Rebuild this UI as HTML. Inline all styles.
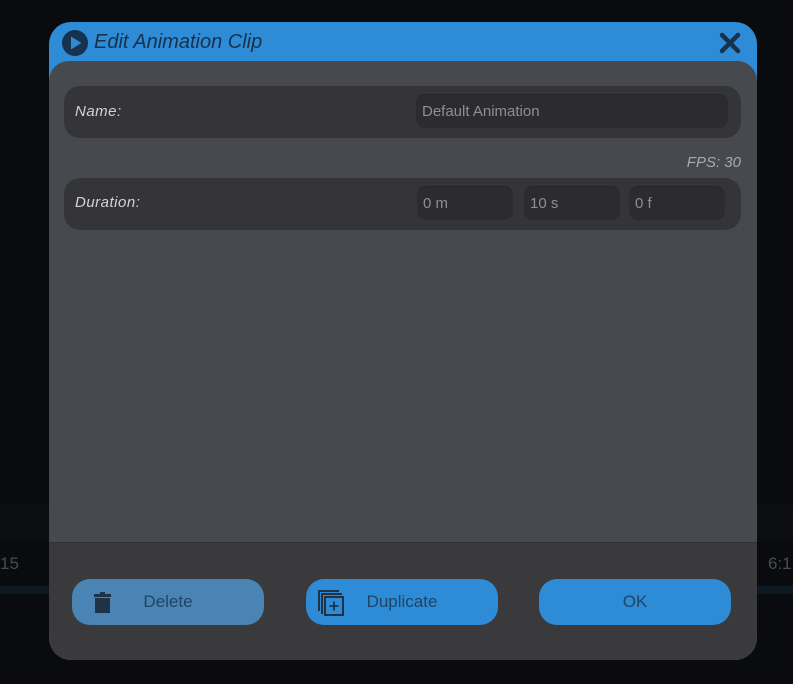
<!DOCTYPE html>
<html><head><style>
*{margin:0;padding:0;box-sizing:border-box}
body{width:793px;height:684px;background:#0a0b0e;position:relative;overflow:hidden;font-family:"Liberation Sans",sans-serif}
.a{position:absolute}
.dlg{left:49px;top:22px;width:708px;height:638px;border-radius:22px;background:#2e8bd6;overflow:hidden}
.body{left:0;top:39px;width:708px;height:599px;background:#46494e;border-radius:20px 20px 22px 22px;overflow:hidden}
.foot{left:0;top:481px;width:708px;height:118px;background:#3a3a3c;border-top:1px solid #333}
.row{background:#353539;border-radius:16px}
.lbl{color:#d4d4d6;font-style:italic;font-size:15px;letter-spacing:.5px}
.inp{background:#2c2c2f;border-radius:9px;color:#8e8f92;font-size:15px;padding-left:6px;line-height:34px;border-top:1px solid #252527}
.btn{border-radius:18px;height:46px;color:#1f4467;font-size:17px;line-height:46px;text-align:center}
</style></head><body>
<div class="a" style="left:0;top:505px;width:793px;height:35px;background:#0d0e11"></div>
<div class="a" style="left:0;top:554px;color:#4a4c50;font-size:17px">15</div>
<div class="a" style="left:768px;top:554px;color:#4a4c50;font-size:17px">6:1</div>
<div class="a" style="left:0;top:586px;width:793px;height:8px;background:#0e1a22"></div>
<div class="a dlg">
 <svg class="a" style="left:12px;top:7px" width="28" height="28" viewBox="0 0 28 28"><circle cx="14" cy="14" r="13" fill="#17324d"/><path d="M10 7.5 L20.5 14 L10 20.5Z" fill="#2e8bd6"/></svg>
 <div class="a" style="left:45px;top:9px;font-size:20px;font-style:italic;color:#17324d">Edit Animation Clip</div>
 <svg class="a" style="left:670px;top:10px" width="22" height="22" viewBox="0 0 22 22"><path d="M3 3 L19 19 M19 3 L3 19" stroke="#17324d" stroke-width="4.5" stroke-linecap="round"/></svg>
 <div class="a body">
  <div class="a row" style="left:15px;top:25px;width:677px;height:52px"></div>
  <div class="a lbl" style="left:26px;top:42px">Name:</div>
  <div class="a inp" style="left:367px;top:33px;width:312px;height:34px">Default Animation</div>
  <div class="a" style="right:16px;top:93px;color:#a9aaad;font-style:italic;font-size:15px">FPS: 30</div>
  <div class="a row" style="left:15px;top:117px;width:677px;height:52px"></div>
  <div class="a lbl" style="left:26px;top:133px">Duration:</div>
  <div class="a inp" style="left:368px;top:125px;width:96px;height:34px">0 m</div>
  <div class="a inp" style="left:475px;top:125px;width:96px;height:34px">10 s</div>
  <div class="a inp" style="left:580px;top:125px;width:96px;height:34px">0 f</div>
  <div class="a foot">
   <div class="a btn" style="left:23px;top:36px;width:192px;background:#4a84b5">Delete</div>
   <svg class="a" style="left:44px;top:49px" width="20" height="22" viewBox="0 0 20 22"><rect x="1" y="2" width="17" height="3" fill="#1f3347"/><rect x="7" y="0" width="5" height="3" fill="#1f3347"/><rect x="2" y="6" width="15" height="15" fill="#1f3347"/></svg>
   <div class="a btn" style="left:257px;top:36px;width:192px;background:#2e8bd6">Duplicate</div>
   <svg class="a" style="left:268px;top:46px" width="28" height="30" viewBox="0 0 28 30"><path d="M2 22 V2 H22" fill="none" stroke="#1f3347" stroke-width="2"/><path d="M5 25 V5 H25" fill="none" stroke="#1f3347" stroke-width="2"/><rect x="8" y="8" width="18" height="18" fill="none" stroke="#1f3347" stroke-width="2"/><path d="M17 12.5 V21.5 M12.5 17 H21.5" stroke="#1f3347" stroke-width="1.8"/></svg>
   <div class="a btn" style="left:490px;top:36px;width:192px;background:#2e8bd6">OK</div>
  </div>
 </div>
</div>
</body></html>
